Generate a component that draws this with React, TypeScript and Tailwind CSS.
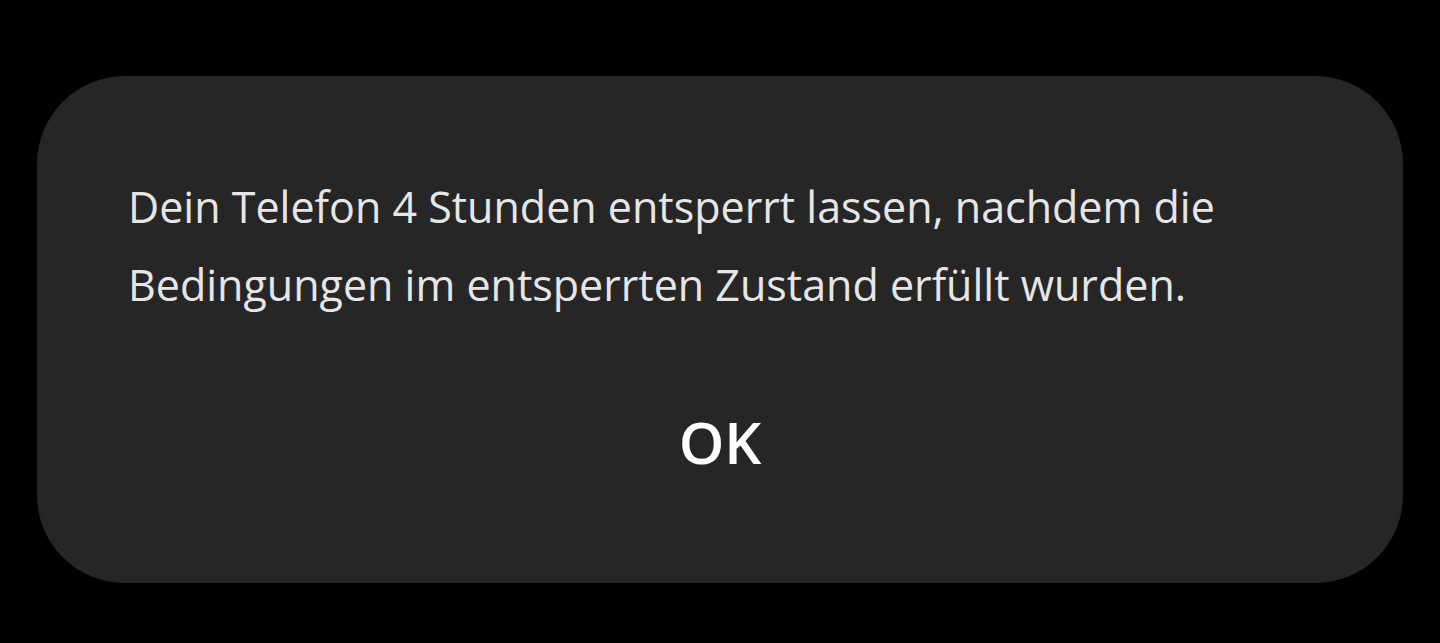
import React from 'react';

export default function App() {
  return (
    <div className="w-[1440px] h-[643px] bg-black pt-[76px] pl-[37px]" style={{ fontFamily: '"Open Sans", sans-serif' }}>
      <div className="w-[1366px] h-[507px] bg-[#262626] rounded-[88px] flex flex-col">
        <p className="pt-[92px] pl-[91px] text-[43px] leading-[78px] text-[#e6e6e6]">
          Dein Telefon 4 Stunden entsperrt lassen, nachdem die
          <br />
          Bedingungen im entsperrten Zustand erfüllt wurden.
        </p>
        <div className="flex justify-center mt-[89px]">
          <span className="text-[58px] font-semibold leading-none text-white">OK</span>
        </div>
      </div>
    </div>
  );
}
